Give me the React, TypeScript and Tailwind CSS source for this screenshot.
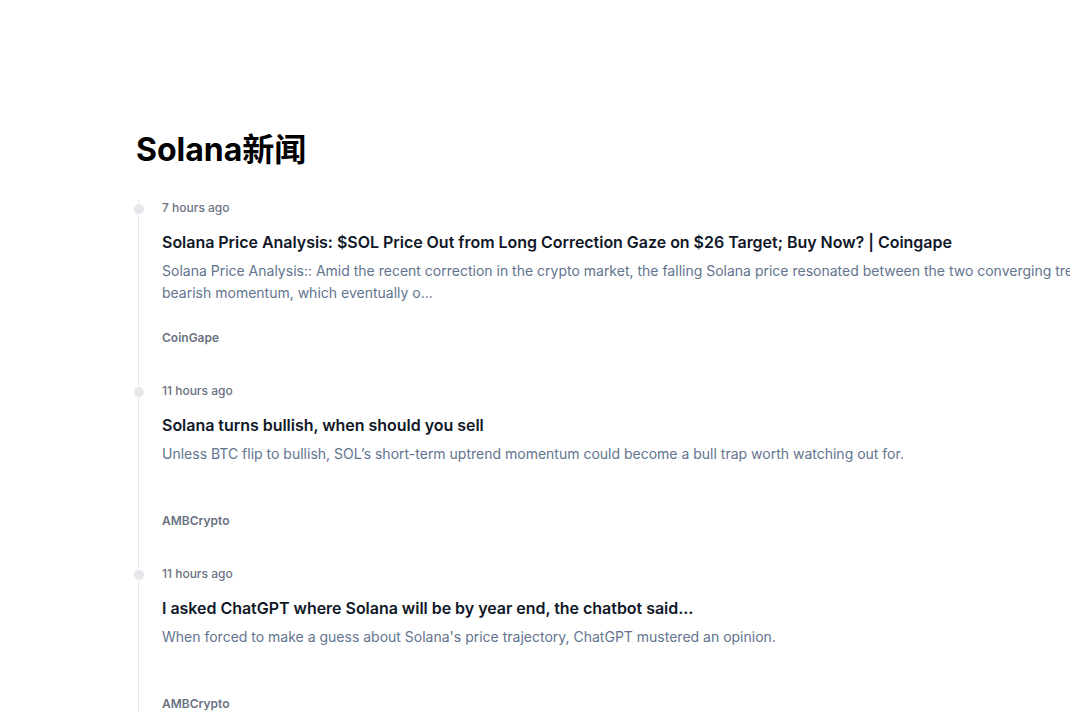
import React from 'react';

type NewsItem = {
  time: string;
  title: string;
  summary: React.ReactNode;
  source: string;
};

const news: NewsItem[] = [
  {
    time: '7 hours ago',
    title: 'Solana Price Analysis: $SOL Price Out from Long Correction Gaze on $26 Target; Buy Now? | Coingape',
    summary: (
      <>
        Solana Price Analysis:: Amid the recent correction in the crypto market, the falling Solana price resonated between the two converging trendlines of a falling wedge pattern, hinting at a shift in the
        <br />
        bearish momentum, which eventually o...
      </>
    ),
    source: 'CoinGape',
  },
  {
    time: '11 hours ago',
    title: 'Solana turns bullish, when should you sell',
    summary: "Unless BTC flip to bullish, SOL’s short-term uptrend momentum could become a bull trap worth watching out for.",
    source: 'AMBCrypto',
  },
  {
    time: '11 hours ago',
    title: 'I asked ChatGPT where Solana will be by year end, the chatbot said...',
    summary: "When forced to make a guess about Solana's price trajectory, ChatGPT mustered an opinion.",
    source: 'AMBCrypto',
  },
];

export default function App() {
  return (
    <div className="h-[720px] w-[1070px] overflow-hidden bg-white font-['Inter','Noto_Sans_CJK_SC',sans-serif]">
      <div className="pl-[136px] pt-[130px]">
        <h1 className="text-[32px] font-bold leading-[40px] text-black">Solana新闻</h1>

        {/* Timeline */}
        <ol className="relative ml-[2px] mt-[30px] border-l border-gray-200">
          {news.map((item, i) => (
            <li key={i} className="mb-[37px] ml-[23px] whitespace-nowrap">
              <div className="absolute -left-1.5 mt-[3px] h-3 w-3 rounded-full border border-white bg-gray-200" />
              <time className="block text-xs font-medium leading-4 text-gray-500">{item.time}</time>
              <h3 className="mt-[14px] text-base font-semibold leading-6 tracking-[-0.03px] text-gray-900">{item.title}</h3>
              <p className="mt-[6px] h-[44px] text-sm leading-[22px] text-slate-500">{item.summary}</p>
              <div className="mt-[26px] text-xs font-semibold leading-4 text-gray-500">{item.source}</div>
            </li>
          ))}
        </ol>
      </div>
    </div>
  );
}
